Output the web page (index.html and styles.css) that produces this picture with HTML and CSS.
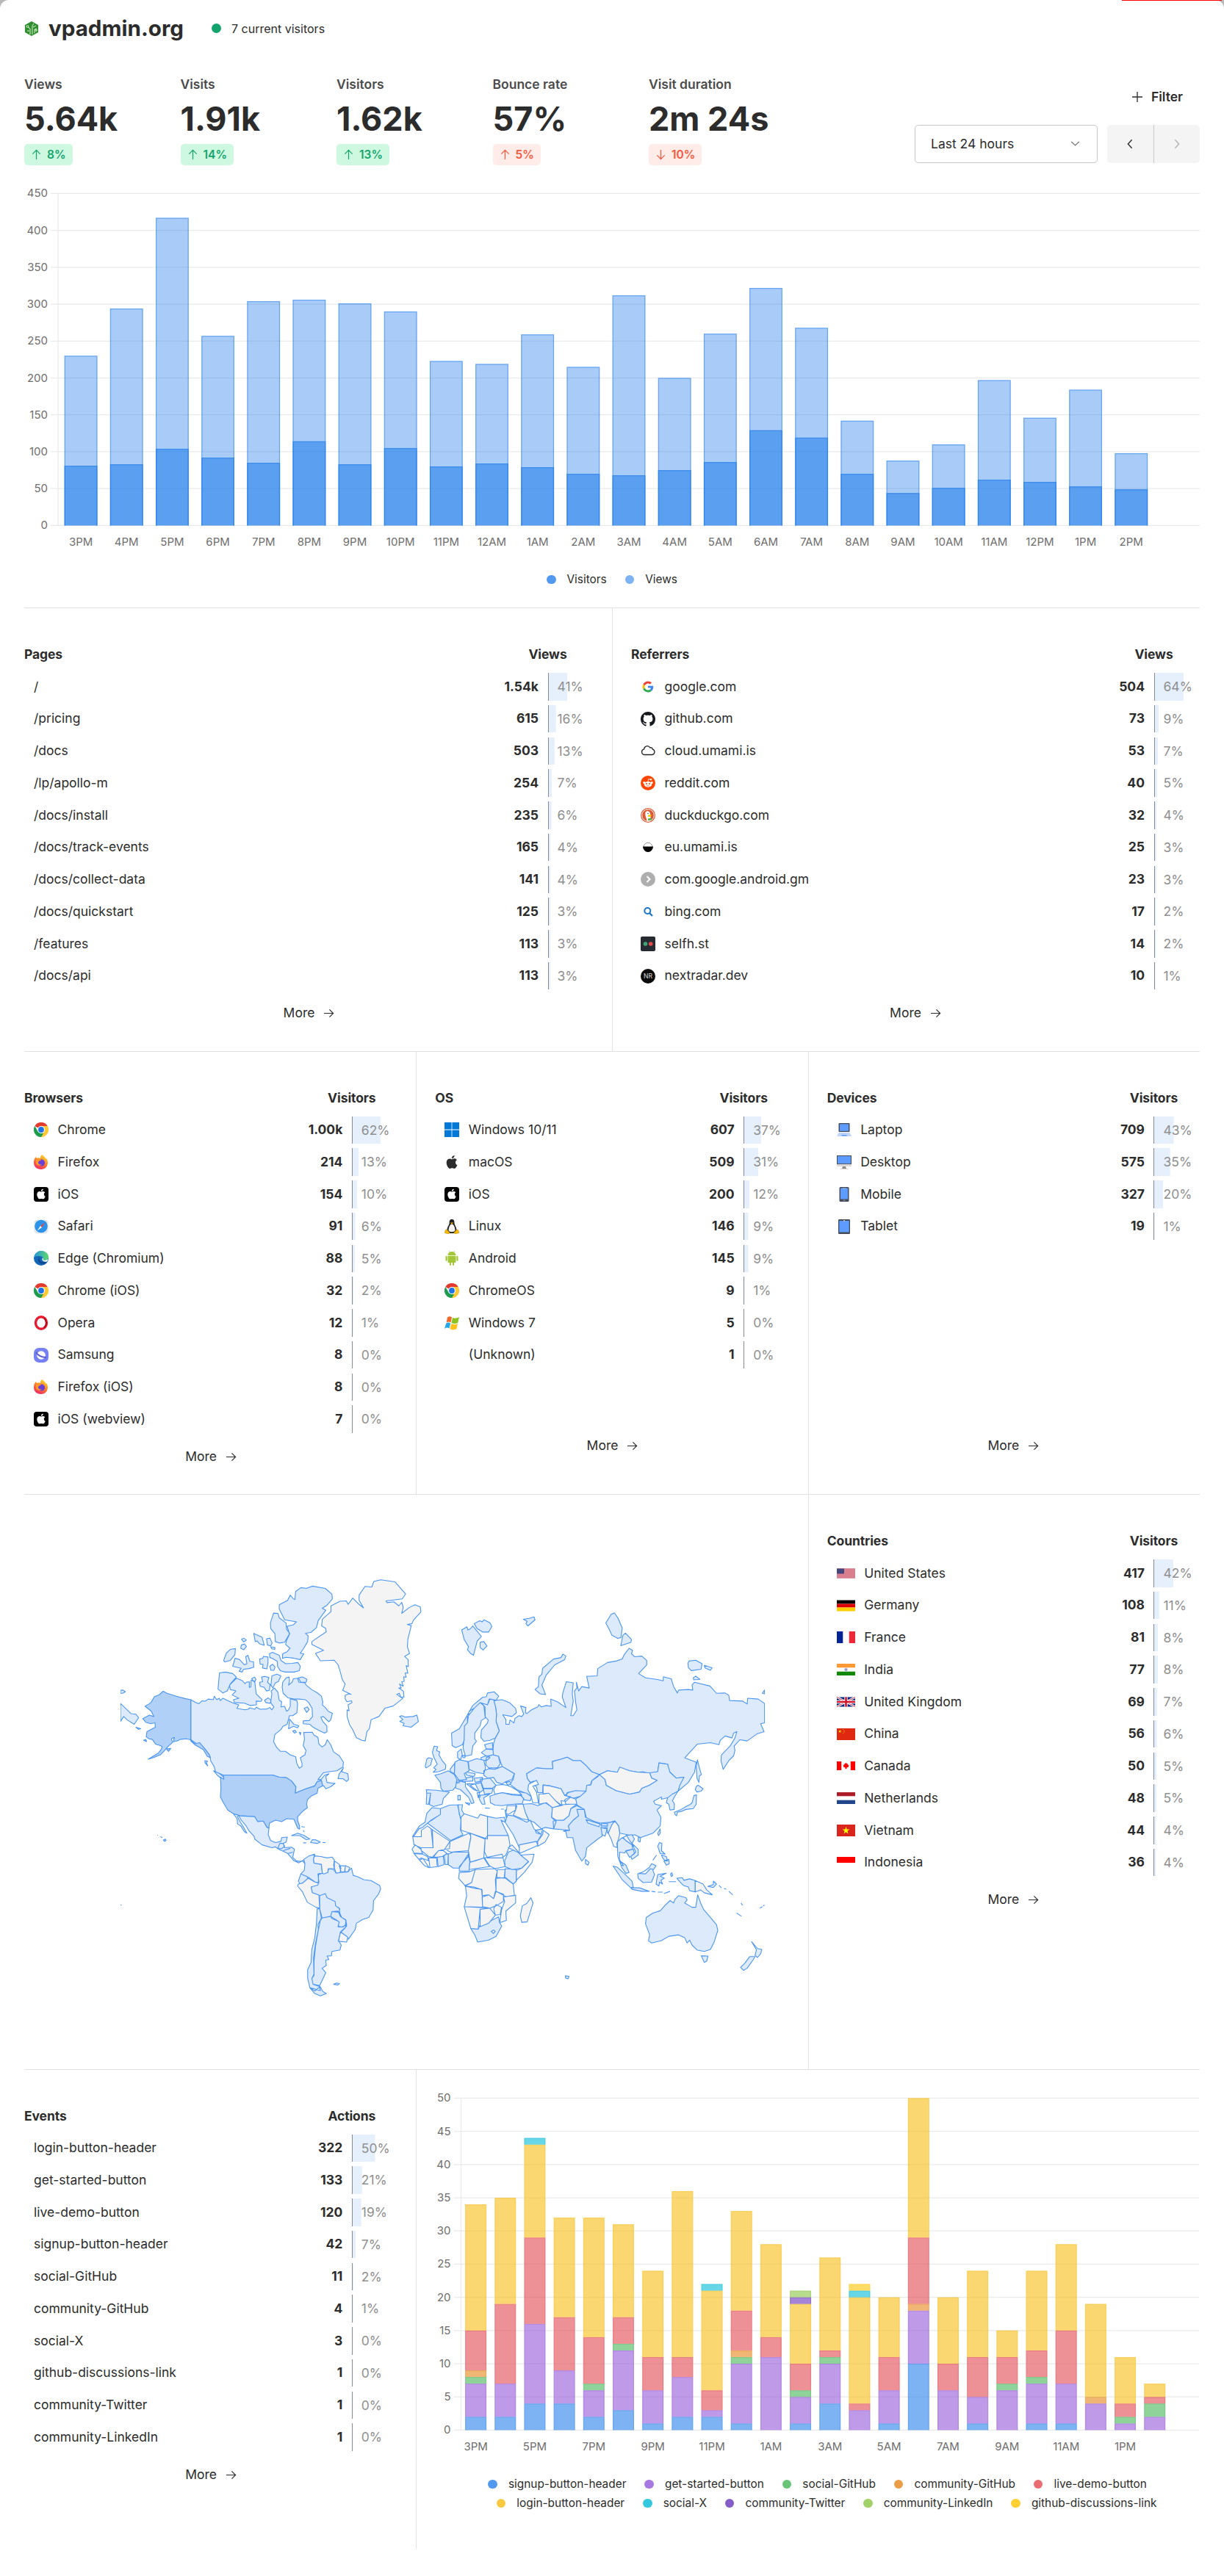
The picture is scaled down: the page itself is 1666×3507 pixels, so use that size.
FILE: index.html
```html
<!DOCTYPE html>
<html lang="en">
<head>
<meta charset="utf-8">
<title>vpadmin.org</title>
<link rel="stylesheet" href="styles.css">
</head>
<body>
<svg class="sprite" aria-hidden="true">
  <symbol id="arrow" viewBox="0 0 16 16"><path d="M1 8h13.500M9 2.500 14.500 8 9 13.500" fill="none" stroke="currentColor" stroke-width="1.300"/></symbol>
  <symbol id="chevron" viewBox="0 0 16 16"><path d="M5 1.500 11 8 5 14.500" fill="none" stroke="currentColor" stroke-width="1.600"/></symbol>
  <symbol id="site" viewBox="0 0 20 20"><path d="M10 0 19 5v10l-9 5-9-5V5z" fill="#2f8f2f"/><path d="M8 18v-8L5 8M11 18V6l2-3M14 16v-5l3-1M4 13h3M12 8l4-2" stroke="#d7efd0" fill="none"/><circle cx="4.500" cy="7" r="1.400" fill="none" stroke="#d7efd0"/><circle cx="16" cy="12" r="1.300" fill="none" stroke="#d7efd0"/></symbol>
  <symbol id="chrome" viewBox="0 0 20 20"><circle cx="10" cy="10" r="10" fill="#fff"/><path d="M10 10 1.300 5A10 10 0 0 1 18.700 5z" fill="#e23b2e"/><path d="M10 10V5h8.700A10 10 0 0 1 10 20z" fill="#fcc934"/><path d="M1.300 5 5.700 12.500 10 15l3-0-3 5A10 10 0 0 1 1.300 5z" fill="#1e9c4d"/><circle cx="10" cy="10" r="5" fill="#fff"/><circle cx="10" cy="10" r="3.900" fill="#1a73e8"/></symbol>
  <symbol id="firefox" viewBox="0 0 20 20"><linearGradient id="ff" x1=".8" y1="0" x2=".3" y2="1"><stop offset="0" stop-color="#ffe03a"/><stop offset=".45" stop-color="#ff8a1f"/><stop offset="1" stop-color="#f0246a"/></linearGradient><path d="M11 0c3 2 4 3 5 5l2 1c3 7-1 14-8 14C4 20 0 16 0 11c0-4 1-6 3-8l1 2c2-1 3-1 5 0 0-2 0-3 2-5z" fill="url(#ff)"/><circle cx="10.500" cy="11" r="4.600" fill="#6a3fd8"/><path d="M3 7c3-1 5-1 7 1-3 0-4 1-4 3s3 3 5 2c-2 3-7 2-8-1z" fill="#ff9a2a"/></symbol>
  <symbol id="apple" viewBox="0 0 24 24"><path d="M12.152 6.896c-.948 0-2.415-1.078-3.960-1.040-2.040.027-3.910 1.183-4.961 3.014-2.117 3.675-.546 9.103 1.519 12.090 1.013 1.454 2.208 3.090 3.792 3.039 1.520-.065 2.090-.987 3.935-.987 1.831 0 2.350.987 3.960.948 1.637-.026 2.676-1.480 3.676-2.948 1.156-1.688 1.636-3.325 1.662-3.415-.039-.013-3.182-1.221-3.220-4.857-.026-3.040 2.480-4.494 2.597-4.559-1.429-2.090-3.623-2.324-4.390-2.376-2-.156-3.675 1.090-4.610 1.090zM15.530 3.830c.843-1.012 1.400-2.427 1.245-3.830-1.207.052-2.662.805-3.532 1.818-.780.896-1.454 2.338-1.273 3.714 1.338.104 2.715-.688 3.559-1.701" fill="currentColor"/></symbol>
  <symbol id="macos" viewBox="0 0 20 20"><use href="#apple" x="1" y="1" width="18" height="18"/></symbol>
  <symbol id="ios" viewBox="0 0 20 20"><rect width="20" height="20" rx="4" fill="#000"/><use href="#apple" x="3" y="2.500" width="14" height="14" color="#fff"/></symbol>
  <symbol id="safari" viewBox="0 0 20 20"><rect x=".5" y=".5" width="19" height="19" rx="4.500" fill="#e2e6ea"/><circle cx="10" cy="9.500" r="8.800" fill="#2b93ea"/><path d="M15.500 4 11 11 9 9z" fill="#e8453c"/><path d="M4.500 15.500 9 9l2 2z" fill="#fff"/></symbol>
  <symbol id="edge" viewBox="0 0 20 20"><linearGradient id="eg" x1="0" y1=".2" x2="1" y2=".3"><stop offset="0" stop-color="#2196dc"/><stop offset="1" stop-color="#5fd66e"/></linearGradient><circle cx="10" cy="10" r="10" fill="#1267b8"/><path d="M.500 8.500C2 3 6 0 10 0c6 0 10 4 10 8 0 3-2 5-5 5-2 0-3-1-2-3-1-3-6-4-12.500-1.500z" fill="url(#eg)"/><path d="M8 8c-2 5 3 9 10 6l-1.500 2.500C13 19 5 18 6 11z" fill="#104a92"/><path d="M13 10c-1 2 0 3 2 3l4.500-1.500-1.500 3c-5 1-8-2-6-5z" fill="#fff"/></symbol>
  <symbol id="opera" viewBox="0 0 20 20"><ellipse cx="10" cy="10" rx="7.500" ry="8.200" fill="#fff" stroke="#e81c30" stroke-width="3.400"/><path d="M14 3.500c4 4 4 9 0 13" fill="none" stroke="#a70014" stroke-width="1.500"/></symbol>
  <symbol id="samsung" viewBox="0 0 20 20"><rect width="20" height="20" rx="7" fill="#7580f2"/><circle cx="10" cy="10" r="5.800" fill="#fff"/><path d="M3 6c3 5 8 7 14 7" fill="none" stroke="#5a5fd0" stroke-width="2"/></symbol>
  <symbol id="windows" viewBox="0 0 20 20"><path d="M0 0h9.600v9.600H0zM10.400 0H20v9.600h-9.600zM0 10.400h9.600V20H0zM10.400 10.400H20V20h-9.600z" fill="#0078d7"/></symbol>
  <symbol id="win7" viewBox="0 0 20 20"><path d="M4 2.500c2-1.500 4-1.500 6-.3L8.500 9.500c-2-1.200-4-1.200-6 .2z" fill="#f2672a"/><path d="M11 2.800c2 1.200 5 1.200 9-.5L18.200 9.800c-3 1.600-6 1.600-8.700.2z" fill="#8cc21f"/><path d="M2.200 10.700c2-1.400 4-1.400 6-.2l-1.700 7c-2-1.200-4-1.200-6.500.2z" fill="#27a8e8"/><path d="M9.200 11c2.500 1.500 5 1.500 8.700 0l-1.500 7.300c-4 1.700-6.500 1.400-9 0z" fill="#fdc31a"/></symbol>
  <symbol id="linux" viewBox="0 0 20 20"><path d="M10 0C7 0 6.500 2 6.700 5 6.500 8 3.500 10 3.500 15L6 19h8l2.500-4c0-5-3-7-3-10 0-3-.5-5-3.500-5z" fill="#222"/><path d="M10 6.500c-2.500 0-4.500 5-4.500 8.500 1 3 8 3 9 0C14.500 11.500 12.500 6.500 10 6.500z" fill="#f4f4f4"/><path d="M8 4.500h4l-2 2.500z" fill="#f5b800"/><path d="m3 13.500 4.500 5-2 1.500L0 18.500 1 15zM17 13.500l-4.500 5 2 1.500 5.500-1.500L19 15z" fill="#f5b800" stroke="#7a5c00" stroke-width=".3"/></symbol>
  <symbol id="android" viewBox="0 0 20 20"><g fill="#a4c639"><path d="M4.500 6A5.500 5 0 0 1 15.500 6zM4.500 6.800h11V15a1 1 0 0 1-1 1h-9a1 1 0 0 1-1-1zM7 15h2v4a1 1 0 0 1-2 0zM11 15h2v4a1 1 0 0 1-2 0z"/><rect x="1.500" y="6.800" width="2.200" height="7" rx="1.100"/><rect x="16.300" y="6.800" width="2.200" height="7" rx="1.100"/></g><path d="m6 0 1.500 2.500M14 0l-1.500 2.500" stroke="#a4c639" stroke-width=".7"/></symbol>
  <symbol id="laptop" viewBox="0 0 20 20"><rect x="2.500" y="1" width="15" height="12" rx="1" fill="#474d58"/><rect x="4" y="2.300" width="12" height="9.500" fill="#5d9bff"/><path d="m2.500 14h15l2.500 5H0z" fill="#bcd6ff"/><path d="M7 17h6l1 1.500H6z" fill="#5d9bff"/></symbol>
  <symbol id="desktop" viewBox="0 0 20 20"><rect y="1" width="20" height="15" rx="1" fill="#dcd8d6"/><rect y="1" width="20" height="12" fill="#474d58"/><rect x="1" y="2" width="18" height="10.200" fill="#5d9bff"/><path d="M8 16h4l1 3H7z" fill="#8d8a88"/><path d="M4 19h12v1H4z" fill="#d8d5d3"/></symbol>
  <symbol id="mobile" viewBox="0 0 20 20"><rect x="3.500" width="13" height="20" rx="1.500" fill="#474d58"/><rect x="5" y="1.500" width="10" height="15" fill="#5d9bff"/><path d="M8 1.500h4v1H8zM8.500 17.800h3v.8h-3z" fill="#b5bac4"/></symbol>
  <symbol id="tablet" viewBox="0 0 20 20"><rect x="2" width="16" height="20" rx="1.300" fill="#474d58"/><rect x="3.300" y="2" width="13.400" height="15.500" fill="#5d9bff"/><path d="M9 1h2v2H9z" fill="#b5bac4"/></symbol>
  <symbol id="google" viewBox="-8 -8 64 64"><path fill="#ea4335" d="M24 9.500c3.540 0 6.710 1.220 9.210 3.600l6.850-6.850C35.900 2.380 30.470 0 24 0 14.620 0 6.510 5.380 2.560 13.220l7.980 6.190C12.430 13.720 17.740 9.500 24 9.500z"/><path fill="#4285f4" d="M46.980 24.550c0-1.570-.150-3.090-.380-4.550H24v9.020h12.940c-.580 2.960-2.260 5.480-4.780 7.180l7.730 6c4.510-4.180 7.090-10.360 7.090-17.650z"/><path fill="#fbbc05" d="M10.530 28.590c-.480-1.450-.760-2.990-.760-4.590s.270-3.140.760-4.590l-7.980-6.190C.920 16.460 0 20.120 0 24c0 3.880.920 7.540 2.560 10.780l7.970-6.190z"/><path fill="#34a853" d="M24 48c6.480 0 11.930-2.130 15.890-5.810l-7.730-6c-2.150 1.450-4.920 2.300-8.160 2.300-6.260 0-11.570-4.220-13.470-9.910l-7.980 6.190C6.510 42.620 14.620 48 24 48z"/></symbol>
  <symbol id="github" viewBox="0 0 16 16"><path fill="#15181c" d="M8 0C3.580 0 0 3.580 0 8c0 3.540 2.290 6.530 5.470 7.590.4.070.55-.17.55-.38 0-.19-.01-.82-.01-1.490-2.010.37-2.530-.49-2.690-.94-.09-.23-.48-.94-.82-1.130-.28-.15-.68-.52-.01-.53.63-.01 1.080.58 1.230.82.72 1.210 1.870.87 2.330.66.070-.52.28-.87.51-1.070-1.780-.2-3.640-.89-3.640-3.950 0-.87.31-1.590.82-2.150-.08-.2-.36-1.020.08-2.120 0 0 .67-.21 2.200.82.64-.18 1.320-.27 2-.27.68 0 1.360.09 2 .27 1.530-1.040 2.200-.82 2.200-.82.44 1.100.16 1.920.08 2.120.51.56.82 1.270.82 2.150 0 3.070-1.870 3.750-3.650 3.950.29.25.54.73.54 1.480 0 1.070-.01 1.930-.01 2.200 0 .21.15.46.55.38A8.012 8.012 0 0 0 16 8c0-4.420-3.580-8-8-8z"/></symbol>
  <symbol id="cloud" viewBox="0 0 20 20"><path d="M5 15.500h10.500a3.800 3.800 0 0 0 .8-7.400A2.500 2.500 0 0 0 12.800 6 4.300 4.300 0 0 0 4.700 7.800 3.900 3.900 0 0 0 5 15.500z" fill="#fff" stroke="#222" stroke-width="1.300"/></symbol>
  <symbol id="reddit" viewBox="0 0 20 20"><circle cx="10" cy="10" r="10" fill="#ff4500"/><ellipse cx="10" cy="11.800" rx="5.300" ry="3.900" fill="#fff"/><circle cx="4.700" cy="9.500" r="1.400" fill="#fff"/><circle cx="15.300" cy="9.500" r="1.400" fill="#fff"/><path d="m10 8 .8-3.500 3 .6" stroke="#fff" fill="none" stroke-width=".8"/><circle cx="14" cy="5.200" r="1.200" fill="#fff"/><circle cx="8" cy="11" r="1.100" fill="#ff4500"/><circle cx="12" cy="11" r="1.100" fill="#ff4500"/><path d="M8 13.500q2 1.200 4 0" stroke="#ff4500" fill="none" stroke-width=".6"/></symbol>
  <symbol id="duck" viewBox="0 0 20 20"><circle cx="10" cy="10" r="10" fill="#de5833"/><circle cx="10" cy="10" r="8.300" fill="#de5833" stroke="#fff" stroke-width="1"/><path d="M6.500 6C8 3 13 4 13 8l1 9-5 1.500C8 14 5.500 10 6.500 6z" fill="#fff"/><path d="M10 9.500 15 9l-1.500 2.500-3.500.5z" fill="#fc0"/><path d="m10 14.500 5-1v3l-5 .5z" fill="#4fae47"/><circle cx="10" cy="7.500" r=".8" fill="#2d4f8e"/></symbol>
  <symbol id="bowl" viewBox="0 0 20 20"><path d="M4 9a6 5.700 0 0 1 12 0" fill="#fff" stroke="#777" stroke-width=".8"/><path d="M3 8.500h14a7 7.500 0 0 1-14 0z" fill="#000"/></symbol>
  <symbol id="next" viewBox="0 0 20 20"><circle cx="10" cy="10" r="10" fill="#aeaeae"/><path d="m8.500 6 4 4-4 4" fill="none" stroke="#fff" stroke-width="2"/></symbol>
  <symbol id="bing" viewBox="0 0 20 20"><circle cx="9.300" cy="9" r="4" fill="none" stroke="#1b74c5" stroke-width="2"/><path d="m12 12 4 4" stroke="#1b74c5" stroke-width="2.300"/></symbol>
  <symbol id="selfh" viewBox="0 0 20 20"><rect width="20" height="20" rx="2" fill="#252a33"/><circle cx="6.500" cy="10" r="2.800" fill="#43a577"/><circle cx="13.700" cy="10" r="2.800" fill="#e5484d"/></symbol>
  <symbol id="us" viewBox="0 0 25 13"><path fill="#e9a9b4" d="M0 0h25v13H0z"/><path d="M0 .5h25M0 2.500h25M0 4.500h25M0 6.500h25M0 8.500h25M0 10.500h25M0 12.500h25" stroke="#c6566b"/><path fill="#46467f" d="M0 0h10v7H0z"/></symbol>
  <symbol id="de" viewBox="0 0 25 15"><path d="M0 0h25v5H0z"/><path fill="#d00" d="M0 5h25v5H0z"/><path fill="#ffce00" d="M0 10h25v5H0z"/></symbol>
  <symbol id="fr" viewBox="0 0 25 16"><path fill="#fff" d="M0 0h25v16H0z"/><path fill="#002395" d="M0 0h8.300v16H0z"/><path fill="#ed2939" d="M16.700 0H25v16h-8.300z"/></symbol>
  <symbol id="in" viewBox="0 0 25 16"><path fill="#fff" d="M0 0h25v16H0z"/><path fill="#f93" d="M0 0h25v5.300H0z"/><path fill="#128807" d="M0 10.700h25V16H0z"/><circle cx="12.500" cy="8" r="2.100" fill="#9a9ad2"/></symbol>
  <symbol id="gb" viewBox="0 0 25 13"><path fill="#00247d" d="M0 0h25v13H0z"/><path d="m0 0 25 13M25 0 0 13" stroke="#fff" stroke-width="2.600"/><path d="m0 0 25 13M25 0 0 13" stroke="#cf142b" stroke-width=".9"/><path d="M12.500 0v13M0 6.500h25" stroke="#fff" stroke-width="4.400"/><path d="M12.500 0v13M0 6.500h25" stroke="#cf142b" stroke-width="2.600"/></symbol>
  <symbol id="cn" viewBox="0 0 25 16"><path fill="#de2910" d="M0 0h25v16H0z"/><path fill="#ffde00" d="m4.200 1.800.6 1.600h1.600l-1.300 1 .5 1.600-1.400-1-1.400 1 .5-1.600-1.300-1h1.600z"/><path d="M8 1.500h1M9.500 3h1M9.500 5h1M8 6.500h1" stroke="#ffb000"/></symbol>
  <symbol id="ca" viewBox="0 0 25 12"><path fill="#fff" d="M0 0h25v12H0z"/><path fill="red" d="M0 0h6.200v12H0zM18.800 0H25v12h-6.200zM12.500 1.500l1.300 2 1.200-.5-.2 2 1.900-.4-1 2 .7 1-2.800.7-.2 2h-1.800l-.2-2-2.800-.7.700-1-1-2 1.900.4-.2-2 1.200.5z"/></symbol>
  <symbol id="nl" viewBox="0 0 25 16"><path fill="#fff" d="M0 0h25v16H0z"/><path fill="#ae1c28" d="M0 0h25v5.300H0z"/><path fill="#21468b" d="M0 10.700h25V16H0z"/></symbol>
  <symbol id="vn" viewBox="0 0 25 16"><path fill="#da251d" d="M0 0h25v16H0z"/><path fill="#ff0" d="m12.500 3 1.200 3.600h3.700l-3 2.200 1.100 3.600-3-2.200-3 2.200 1.100-3.600-3-2.200h3.700z"/></symbol>
  <symbol id="id" viewBox="0 0 25 16"><path fill="#fff" d="M0 0h25v16H0z"/><path fill="red" d="M0 0h25v8H0z"/></symbol>
</svg>
<div class="page">
<div class="progress"></div>
<div class="container">
  <header class="site-header"><svg class="icon"><use href="#site"/></svg><h1>vpadmin.org</h1><span class="live-dot"></span><span>7 current visitors</span></header>
  <section class="overview">
    <div class="summary">
      <div class="metrics">
        <div class="metric"><div class="metric-label">Views</div><div class="metric-value">5.64k</div><span class="badge"><svg class="up"><use href="#arrow"/></svg>8%</span></div>
        <div class="metric"><div class="metric-label">Visits</div><div class="metric-value">1.91k</div><span class="badge"><svg class="up"><use href="#arrow"/></svg>14%</span></div>
        <div class="metric"><div class="metric-label">Visitors</div><div class="metric-value">1.62k</div><span class="badge"><svg class="up"><use href="#arrow"/></svg>13%</span></div>
        <div class="metric"><div class="metric-label">Bounce rate</div><div class="metric-value">57%</div><span class="badge bad"><svg class="up"><use href="#arrow"/></svg>5%</span></div>
        <div class="metric"><div class="metric-label">Visit duration</div><div class="metric-value">2m 24s</div><span class="badge bad"><svg class="down"><use href="#arrow"/></svg>10%</span></div>
      </div>
      <div class="controls">
        <button class="filter"><svg viewBox="0 0 14 14"><path d="M7 0v14M0 7h14" stroke="currentColor" stroke-width="1.300"/></svg>Filter</button>
        <div class="range">
          <div class="select">Last 24 hours<svg class="caret"><use href="#chevron"/></svg></div>
          <div class="pager"><span><svg class="prev"><use href="#chevron"/></svg></span><span class="off"><svg><use href="#chevron"/></svg></span></div>
        </div>
      </div>
    </div>
    <svg class="chart" id="traffic"></svg>
    <div class="legend"><span><i style="background:#5199ef"></i>Visitors</span><span><i style="background:#7db3f3"></i>Views</span></div>
  </section>

  <section class="grid two">
    <div class="panel">
      <div class="head"><span>Pages</span><span>Views</span></div>
      <ul>
        <li><span>/</span><b>1.54k</b><em style="--p:41%">41%</em></li>
        <li><span>/pricing</span><b>615</b><em style="--p:16%">16%</em></li>
        <li><span>/docs</span><b>503</b><em style="--p:13%">13%</em></li>
        <li><span>/lp/apollo-m</span><b>254</b><em style="--p:7%">7%</em></li>
        <li><span>/docs/install</span><b>235</b><em style="--p:6%">6%</em></li>
        <li><span>/docs/track-events</span><b>165</b><em style="--p:4%">4%</em></li>
        <li><span>/docs/collect-data</span><b>141</b><em style="--p:4%">4%</em></li>
        <li><span>/docs/quickstart</span><b>125</b><em style="--p:3%">3%</em></li>
        <li><span>/features</span><b>113</b><em style="--p:3%">3%</em></li>
        <li><span>/docs/api</span><b>113</b><em style="--p:3%">3%</em></li>
      </ul>
      <div class="more">More<svg><use href="#arrow"/></svg></div>
    </div>
    <div class="panel">
      <div class="head"><span>Referrers</span><span>Views</span></div>
      <ul>
        <li><svg class="icon"><use href="#google"/></svg><span>google.com</span><b>504</b><em style="--p:64%">64%</em></li>
        <li><svg class="icon"><use href="#github"/></svg><span>github.com</span><b>73</b><em style="--p:9%">9%</em></li>
        <li><svg class="icon"><use href="#cloud"/></svg><span>cloud.umami.is</span><b>53</b><em style="--p:7%">7%</em></li>
        <li><svg class="icon"><use href="#reddit"/></svg><span>reddit.com</span><b>40</b><em style="--p:5%">5%</em></li>
        <li><svg class="icon"><use href="#duck"/></svg><span>duckduckgo.com</span><b>32</b><em style="--p:4%">4%</em></li>
        <li><svg class="icon"><use href="#bowl"/></svg><span>eu.umami.is</span><b>25</b><em style="--p:3%">3%</em></li>
        <li><svg class="icon"><use href="#next"/></svg><span>com.google.android.gm</span><b>23</b><em style="--p:3%">3%</em></li>
        <li><svg class="icon"><use href="#bing"/></svg><span>bing.com</span><b>17</b><em style="--p:2%">2%</em></li>
        <li><svg class="icon"><use href="#selfh"/></svg><span>selfh.st</span><b>14</b><em style="--p:2%">2%</em></li>
        <li><svg class="icon" viewBox="0 0 20 20"><circle cx="10" cy="10" r="10" fill="#0b0b0b"/><text class="monogram" x="10" y="13" text-anchor="middle">NR</text></svg><span>nextradar.dev</span><b>10</b><em style="--p:1%">1%</em></li>
      </ul>
      <div class="more">More<svg><use href="#arrow"/></svg></div>
    </div>
  </section>

  <section class="grid three">
    <div class="panel">
      <div class="head"><span>Browsers</span><span>Visitors</span></div>
      <ul>
        <li><svg class="icon"><use href="#chrome"/></svg><span>Chrome</span><b>1.00k</b><em style="--p:62%">62%</em></li>
        <li><svg class="icon"><use href="#firefox"/></svg><span>Firefox</span><b>214</b><em style="--p:13%">13%</em></li>
        <li><svg class="icon"><use href="#ios"/></svg><span>iOS</span><b>154</b><em style="--p:10%">10%</em></li>
        <li><svg class="icon"><use href="#safari"/></svg><span>Safari</span><b>91</b><em style="--p:6%">6%</em></li>
        <li><svg class="icon"><use href="#edge"/></svg><span>Edge (Chromium)</span><b>88</b><em style="--p:5%">5%</em></li>
        <li><svg class="icon"><use href="#chrome"/></svg><span>Chrome (iOS)</span><b>32</b><em style="--p:2%">2%</em></li>
        <li><svg class="icon"><use href="#opera"/></svg><span>Opera</span><b>12</b><em style="--p:1%">1%</em></li>
        <li><svg class="icon"><use href="#samsung"/></svg><span>Samsung</span><b>8</b><em style="--p:0%">0%</em></li>
        <li><svg class="icon"><use href="#firefox"/></svg><span>Firefox (iOS)</span><b>8</b><em style="--p:0%">0%</em></li>
        <li><svg class="icon"><use href="#ios"/></svg><span>iOS (webview)</span><b>7</b><em style="--p:0%">0%</em></li>
      </ul>
      <div class="more">More<svg><use href="#arrow"/></svg></div>
    </div>
    <div class="panel">
      <div class="head"><span>OS</span><span>Visitors</span></div>
      <ul>
        <li><svg class="icon"><use href="#windows"/></svg><span>Windows 10/11</span><b>607</b><em style="--p:37%">37%</em></li>
        <li><svg class="icon"><use href="#macos"/></svg><span>macOS</span><b>509</b><em style="--p:31%">31%</em></li>
        <li><svg class="icon"><use href="#ios"/></svg><span>iOS</span><b>200</b><em style="--p:12%">12%</em></li>
        <li><svg class="icon"><use href="#linux"/></svg><span>Linux</span><b>146</b><em style="--p:9%">9%</em></li>
        <li><svg class="icon"><use href="#android"/></svg><span>Android</span><b>145</b><em style="--p:9%">9%</em></li>
        <li><svg class="icon"><use href="#chrome"/></svg><span>ChromeOS</span><b>9</b><em style="--p:1%">1%</em></li>
        <li><svg class="icon"><use href="#win7"/></svg><span>Windows 7</span><b>5</b><em style="--p:0%">0%</em></li>
        <li><svg class="icon"></svg><span>(Unknown)</span><b>1</b><em style="--p:0%">0%</em></li>
      </ul>
      <div class="more">More<svg><use href="#arrow"/></svg></div>
    </div>
    <div class="panel">
      <div class="head"><span>Devices</span><span>Visitors</span></div>
      <ul>
        <li><svg class="icon"><use href="#laptop"/></svg><span>Laptop</span><b>709</b><em style="--p:43%">43%</em></li>
        <li><svg class="icon"><use href="#desktop"/></svg><span>Desktop</span><b>575</b><em style="--p:35%">35%</em></li>
        <li><svg class="icon"><use href="#mobile"/></svg><span>Mobile</span><b>327</b><em style="--p:20%">20%</em></li>
        <li><svg class="icon"><use href="#tablet"/></svg><span>Tablet</span><b>19</b><em style="--p:1%">1%</em></li>
      </ul>
      <div class="more">More<svg><use href="#arrow"/></svg></div>
    </div>
  </section>

  <section class="grid geo">
    <div class="map">
      <svg viewBox="42 50 2630 1500" preserveAspectRatio="none">
        <g>
          <path class="none" d="M1016 130 1040 100 1068 102 1076 83 1104 77 1162 84 1206 126 1192 143 1126 150 1130 156 1158 153 1178 167 1190 155 1196 172 1190 193 1220 173 1244 163 1266 171 1268 188 1238 216 1232 228 1213 231 1229 235 1215 282 1213 308 1222 331 1202 341 1216 352 1217 376 1208 373 1215 399 1204 398 1208 413 1198 411 1200 427 1190 428 1196 444 1181 436 1188 450 1178 450 1197 461 1199 481 1186 482 1180 468 1170 472 1194 486 1155 512 1122 519 1097 548 1065 559 1058 590 1048 600 1041 632 1027 630 1005 621 989 592 977 576 967 548 967 525 975 528 971 508 987 500 985 494 966 497 959 487 959 475 975 470 983 472 949 458 959 436 948 422 938 391 930 370 914 354 858 356 838 331 871 320 823 300 823 290 882 256 879 244 863 236 866 213 901 187 901 167 938 151 964 150 971 162 990 140 1013 160 1034 174 1016 148Z"/>
          <path d="M754 145 757 117 779 104 800 107 826 99 878 107 905 127 907 143 885 165 866 175 880 182 849 218 842 242 820 258 797 262 808 270 806 290 790 313 776 330 790 332 776 352 748 347 716 344 703 348 704 332 722 325 734 313 716 300 720 285 732 265 722 237 748 232 760 222 712 215 690 178 690 163 724 148 735 130 748 143ZM667 192 685 193 690 208 718 226 720 248 733 262 712 292 690 295 674 290 672 262 655 245 654 225ZM586 262 620 275 629 303 610 298 600 288 592 290ZM638 280 652 278 661 295 655 305 642 302ZM655 308 672 310 672 317 660 315ZM536 282 545 278 556 285 545 291ZM535 302 548 298 556 307 545 318 533 313ZM463 355 474 330 490 317 511 314 509 335 490 355 468 360ZM500 375 510 347 528 352 548 370 558 366 553 342 562 337 570 358 585 360 586 378 567 383 545 385 538 395 526 392 535 382ZM610 350 622 348 626 341 644 343 644 362 640 384 622 381 624 368 612 368ZM652 375 662 368 673 378 668 389 656 389ZM650 332 662 327 690 337 697 355 716 366 742 365 766 362 776 375 772 390 750 395 715 395 694 390 683 375 682 358 662 348 652 345ZM446 398 470 395 500 400 515 412 490 436 478 460 460 467 440 453ZM487 440 516 416 540 425 550 435 556 430 568 428 568 448 574 446 575 423 590 427 596 470 620 490 615 496 596 495 597 508 570 510 548 502 507 500 503 490 525 485 498 474 513 460 490 455ZM577 418 589 412 595 420 589 430ZM610 430 622 428 618 412 632 410 648 414 642 430 653 438 650 458 638 460 628 447 612 444ZM660 408 680 402 697 408 686 428 674 432 664 450 656 440Z"/>
          <path d="M704 430 718 415 730 412 732 425 728 440 742 430 748 418 765 416 770 430 795 432 800 440 822 455 845 466 862 478 868 498 866 508 878 517 890 530 907 537 900 560 892 566 870 548 860 550 868 565 884 580 885 600 875 605 850 595 825 583 815 575 788 573 788 563 812 562 826 548 824 520 810 500 796 490 770 488 750 488 726 484 706 468 702 448ZM768 415 785 412 803 420 800 430 778 430ZM792 520 805 515 812 524 802 534ZM732 557 750 575 770 580 765 587 748 582 728 590ZM745 598 755 596 760 602 752 605ZM772 602 778 604 776 611ZM630 492 645 484 658 493 652 503 635 500ZM952 725 945 738 970 745 973 765 965 772 950 762 930 762 935 745ZM422 735 440 740 464 757 462 767 440 752ZM386 700 398 702 392 706 398 718 388 708Z"/>
          <path d="M329 490 350 500 362 504 374 494 388 495 400 488 421 490 425 478 435 490 445 485 450 493 460 485 480 493 505 503 525 508 517 520 550 525 563 523 570 518 590 523 597 516 612 523 640 522 652 517 660 525 668 515 655 500 660 470 657 460 670 450 684 463 690 492 700 497 697 515 712 513 720 530 728 525 735 512 735 487 762 493 765 505 762 535 745 545 732 545 722 575 705 582 697 593 672 610 667 635 680 655 695 668 715 668 735 680 757 687 762 710 772 726 783 720 783 710 776 690 795 680 799 665 788 648 793 625 790 603 825 602 832 612 848 620 852 643 865 653 878 645 886 628 900 645 912 670 935 683 952 705 950 722 925 735 895 738 870 742 848 765 860 765 875 750 893 745 880 755 885 775 908 778 918 778 900 790 880 797 872 787 866 787 862 768 845 772 835 787 800 797 790 800 755 812 758 790 740 770 718 758 690 757 665 750 462 750 430 738 424 720 410 700 408 690 405 680 385 658 350 640 329 628Z"/>
          <path class="top" d="M329 490 305 486 270 478 232 468 216 461 200 473 180 480 168 498 158 505 142 513 150 518 168 530 178 548 160 543 133 555 145 568 165 573 183 570 184 585 168 592 150 600 147 618 158 625 172 627 185 643 205 648 212 652 208 662 195 675 155 695 175 690 205 680 222 665 240 648 255 637 250 625 262 620 258 635 275 632 285 627 310 625 329 628 345 642 365 638 385 658 405 680 409 690 396 685 380 662 345 645 329 632ZM230 660 247 658 238 668ZM136 630 145 627 149 634ZM462 750 665 750 690 757 718 758 740 770 758 790 755 812 790 800 800 797 835 787 845 772 862 768 868 787 848 795 845 812 820 822 805 835 802 850 805 862 785 875 765 893 765 905 773 925 773 936 765 932 755 912 750 902 720 900 700 910 675 905 650 915 648 932 640 930 625 910 610 908 602 910 590 893 575 892 530 890 503 883 480 870 462 845 450 825 452 790 450 757 464 764ZM217 973 225 970 228 975 222 978ZM205 962 213 965M192 957h2M42 1197h4"/>
          <path d="M503 883 530 890 575 892 590 893 602 910 625 908 640 930 648 932 645 955 655 975 675 982 697 978 700 965 723 963 718 980 706 985 712 995 700 1003 684 1003 675 997 660 1000 620 990 590 970 587 960 565 940 555 925 535 905 524 888 520 893 530 910 545 930 558 950 548 945 533 925 520 918 518 900ZM684 1003 692 985 706 985 712 1000 740 998 752 1005 745 1033 760 1045 775 1047 792 1042 795 1055 785 1045 770 1052 750 1045 735 1030 722 1018 700 1010ZM706 1010 735 1002M725 1020 745 1015M740 958 765 950 790 957 815 970 800 972 775 958ZM818 982 825 972 840 973 858 980 845 985ZM867 982h12M788 983h12M780 927 794 929M788 940 792 945"/>
          <path d="M795 1055 790 1040 812 1028 835 1022 830 1038 832 1053 862 1057 866 1088 848 1090 852 1120 836 1118 815 1105 800 1098 778 1090 792 1078ZM778 1090 805 1100 805 1107 785 1122 775 1125 768 1115ZM866 1088 888 1085 892 1072 912 1075 922 1087 942 1085 970 1083 985 1070 992 1095 1010 1100 1035 1110 1065 1113 1100 1130 1104 1142 1095 1160 1075 1182 1073 1215 1055 1240 1030 1247 1005 1260 1000 1282 972 1315 965 1305 940 1290 965 1270 962 1248 945 1240 937 1225 935 1208 920 1200 918 1185 885 1172 878 1158 855 1165 825 1155 820 1138 830 1125 850 1122 850 1093ZM855 1165 878 1158 885 1172 918 1185 920 1200 937 1210 935 1222 905 1220 900 1236 865 1242 855 1210ZM900 1236 905 1220 930 1218 940 1237 962 1250 960 1268 945 1273 930 1270 935 1255 905 1243ZM865 1242 900 1236 935 1255 930 1272 950 1273 965 1262 960 1275 940 1292 932 1320 943 1335 938 1352 905 1357 903 1372 885 1373 893 1385 880 1387 882 1405 865 1415 880 1430 868 1452 855 1475 828 1470 823 1450 832 1435 832 1390 838 1340 848 1290 858 1250ZM845 1210 855 1210 862 1242 848 1265 850 1280 838 1330 830 1380 832 1440 823 1450 828 1470 855 1478 858 1492 815 1482 806 1450 806 1420 820 1395 823 1350 835 1310 842 1260ZM815 1482 835 1493 857 1478 868 1495 882 1502 858 1510 835 1502ZM912 1470 924 1466 936 1468 928 1473Z"/>
          <path class="none" d="M835 1028 860 1030 885 1035 905 1032 915 1042 912 1060 915 1072 890 1072 888 1085 872 1090 866 1088 862 1057 832 1053 830 1038ZM915 1045 935 1057 942 1070 938 1085 922 1087 915 1070ZM935 1062 960 1062 958 1083 942 1082ZM960 1062 978 1068 970 1083 957 1083ZM768 1125 785 1122 808 1105 836 1118 850 1122 848 1128 820 1135 825 1155 852 1163 855 1208 840 1205 805 1188 785 1152 765 1132ZM940 1290 970 1308 965 1325 932 1322Z"/>
          <path d="M42 503 85 538 105 540 116 552 98 575 70 560 55 548 42 565ZM42 458 52 457 62 463 50 468 42 468ZM105 585 125 590 115 592ZM1181 548 1190 545 1205 550 1235 548 1252 543 1258 565 1228 585 1195 580 1200 572 1182 565 1195 558Z"/>
        </g>
        <g transform="translate(1200)">
          <path d="M235 250 256 239 260 250 270 246 280 236 315 272 298 288 283 337 270 330 258 318 263 308 245 283ZM286 228 308 218 318 222 326 215 350 225 358 238 345 257 320 257 297 245ZM310 292 325 290 338 305 322 319 310 310ZM486 213 510 210 530 205 534 215 505 236 497 228 502 220ZM823 226 845 196 858 191 872 208 890 243 885 276 872 279 848 268 838 250ZM884 304 893 268 903 261 928 283 925 293ZM1158 365 1162 357 1190 354 1216 366 1212 385 1172 390 1160 380ZM1225 372 1257 380 1250 389 1228 381ZM1180 415 1190 409 1207 420 1182 422ZM1462 468 1471 457 1471 470ZM534 455 548 445 550 412 562 402 565 382 610 350 640 345 648 333 660 340 655 352 615 370 580 405 562 440 577 472 555 470Z"/>
          <path d="M375 492 400 490 430 500 455 520 458 535 440 548 402 542 415 558 415 575 428 575 432 560 448 570 452 555 468 545 480 548 488 540 475 512 497 517 495 535 500 538 520 525 545 515 550 507 560 515 580 510 600 513 598 488 625 497 660 517 645 480 648 465 662 428 690 432 686 470 690 495 680 545 690 545 705 525 700 500 695 460 705 450 703 430 712 460 725 445 755 450 745 410 788 408 790 383 830 362 865 357 890 350 898 335 918 313 932 320 928 332 940 342 970 340 990 355 990 370 957 400 985 415 1030 420 1057 425 1058 411 1090 418 1100 445 1115 467 1120 457 1160 455 1178 457 1175 440 1185 430 1248 443 1275 468 1310 467 1325 475 1328 493 1382 495 1400 505 1402 485 1445 488 1471 503 1471 570 1455 573 1469 600 1440 608 1400 632 1370 628 1347 650 1350 665 1345 683 1325 700 1302 730 1293 700 1295 680 1330 650 1350 622 1358 600 1345 605 1338 622 1310 615 1290 630 1285 645 1250 638 1197 643 1145 690 1165 697 1192 705 1185 740 1160 775 1118 805 1125 780 1130 765 1142 757 1110 760 1080 735 1075 712 1040 708 1035 738 1000 745 975 738 955 740 920 735 880 725 870 740 830 735 797 748 765 738 740 715 720 700 690 700 665 688 640 695 605 703 607 728 580 728 540 725 500 745 503 762 515 775 508 790 510 805 520 825 490 810 460 800 430 780 445 765 450 745 400 720 385 685 360 680 365 640 372 622 388 597 375 565 377 540 373 515 365 495Z"/>
          <path d="M193 605 225 590 250 555 280 510 320 482 335 480 340 467 367 463 386 478 375 492 350 488 340 508 310 500 285 520 265 530 258 570 246 580 245 630 238 645 210 655 196 648ZM245 625 246 580 258 570 258 550 285 520 310 500 325 510 331 553 315 562 310 580 288 605 288 625 295 633 280 650 275 680 250 685 240 655ZM310 500 340 508 347 488 365 490 373 515 377 540 375 565 388 597 372 622 350 630 325 633 313 620 315 595 340 570 343 560 331 550 330 515ZM218 670 233 660 237 680 230 697 218 690ZM238 682h10v8h-8ZM115 672 122 650 137 652 132 665 145 670 142 680 155 700 170 715 168 730 140 738 118 740 130 730 120 725 135 712 122 690ZM86 720 92 695 100 690 115 693 108 715 90 725Z"/>
          <path d="M1197 697 1205 725 1213 748 1205 752 1203 775 1195 760 1192 720ZM500 745 540 725 580 728 607 728 605 703 640 695 665 688 690 700 720 700 740 715 765 738 797 748 790 755 765 770 760 785 745 785 742 805 700 803 670 810 655 820 640 797 595 787 567 783 565 810 545 810 540 790 525 785 530 770 515 775 503 762ZM665 810 700 803 742 805 720 822 690 830 662 825ZM620 905 650 905 672 890 680 865 705 855 735 868 715 870 712 890 690 905 670 925 675 940 650 938 610 935 608 908ZM485 850 520 848 545 855 575 845 605 860 602 895 620 910 610 935 575 930 560 935 530 912 508 905 495 880 485 868ZM797 748 820 765 825 785 865 803 920 815 960 808 970 795 1000 785 1032 768 1010 760 1002 742 1035 738 1040 708 1075 712 1085 740 1110 760 1142 757 1125 785 1118 805 1095 815 1075 828 1050 833 1050 825 1018 840 1025 850 1050 855 1032 870 1048 895 1045 925 1015 950 975 962 965 965 940 955 930 958 910 955 880 950 875 925 860 908 840 912 800 915 745 902 735 868 700 850 700 832 720 822 742 805 745 785 762 783 767 768ZM955 965 965 965 963 980 955 977ZM1035 950 1045 935 1045 950 1038 958ZM1075 828 1095 815 1118 805 1105 822 1095 838 1103 848 1102 868 1085 870 1080 850 1070 845ZM1193 788 1200 785 1220 797 1212 805 1195 808 1188 800ZM1183 820 1193 818 1192 850 1180 865 1150 868 1130 875 1115 878 1112 890 1105 885 1103 878 1130 868 1150 858 1165 852 1175 845Z"/>
          <path class="mid" d="M705 868 735 868 740 895 800 920 830 915 860 908 850 930 830 950 828 930 808 932 808 960 790 970 745 1000 740 1030 725 1046 700 1010 688 965 665 965 660 945 650 942 675 940 670 925 690 905 712 890Z"/>
          <path d="M742 903 800 918 795 928 750 915ZM805 917h25v8h-25ZM803 930 828 935 820 960 808 955ZM870 980 890 965 905 975 930 990 932 1005 905 1010 900 1018 880 1015 878 1040 895 1062 885 1060 872 1030ZM905 958 930 955 940 970 930 985 955 1005 955 1025 930 1040 925 1030 945 1015 935 995 915 975ZM905 1012 935 1005 940 1020 920 1033ZM880 1045 905 1060 918 1085 905 1088 888 1068ZM853 1063 870 1067 900 1090 930 1115 935 1135 925 1138 890 1110ZM925 1138 960 1138 1000 1150 970 1150 930 1143ZM1010 1150 1025 1152M1035 1153h20M1060 1158 1085 1150M953 1090 975 1083 1000 1068 1010 1055 1028 1062 1015 1078 1022 1092 1010 1118 975 1120 955 1105ZM955 1088 985 1090 1005 1072 1018 1075M1032 1105 1035 1092 1070 1088 1045 1098 1062 1105 1048 1112 1055 1125 1042 1118 1040 1132 1028 1125ZM1087 1090 1093 1086 1096 1096 1090 1099ZM1080 1117h30M1113 1105 1135 1103 1142 1112 1165 1107 1188 1113 1188 1152 1165 1148 1160 1135 1140 1130 1125 1117ZM1035 995 1042 982 1052 985 1050 1010 1065 1022 1045 1020ZM1050 1025 1070 1030 1075 1045 1065 1045 1055 1035ZM1060 1045 1080 1040 1082 1055 1070 1060ZM1015 1043 1030 1025M1240 1133 1262 1127 1262 1115 1275 1125 1262 1137ZM1285 1130 1295 1138M1305 1140 1315 1143M1325 1150 1341 1162"/>
          <path d="M988 1240 1015 1225 1045 1217 1065 1198 1085 1182 1100 1190 1105 1178 1120 1165 1150 1172 1155 1180 1145 1190 1175 1205 1190 1205 1198 1162 1210 1190 1222 1212 1250 1240 1275 1265 1280 1285 1265 1325 1250 1350 1225 1357 1195 1352 1175 1335 1165 1318 1155 1328 1145 1310 1120 1300 1080 1305 1050 1320 1010 1328 997 1320 1002 1300 985 1262ZM1213 1372 1240 1373 1235 1390 1225 1395ZM1418 1323 1435 1340 1442 1347 1460 1350 1455 1365 1442 1378 1432 1370 1438 1352ZM1410 1375 1432 1375 1425 1385 1400 1415 1385 1422 1373 1412 1390 1398ZM1357 1225 1377 1236M1452 1208 1462 1203M1465 1200 1471 1198M1375 1190 1381 1198M658 1441 673 1443 669 1451 659 1449Z"/>
          <path d="M350 822 375 815 400 810 440 818 475 820 488 830 482 848 450 850 420 852 400 855 370 853 352 845ZM325 735 345 728 370 730 400 720 450 745 440 765 415 772 400 780 378 775 365 758 340 760 325 750ZM335 690 360 680 385 685 392 712 380 725 345 725 333 715ZM328 645 360 638 362 660 335 660ZM315 672 335 660 362 662 365 680 335 685ZM313 690 335 683 350 690 335 700 315 697ZM262 703 295 693 325 698 332 725 325 745 290 740 265 730ZM187 730 207 708 205 745 190 738ZM90 800 130 802 185 808 160 830 155 850 120 858 100 850 108 812 92 812ZM92 812 108 812 103 850 90 850ZM208 778 225 770 250 775 250 790 275 820 285 845 275 848 262 825 230 800 210 795ZM250 845 268 847 266 853ZM219 820h10v15h-10ZM205 768 228 766 225 776 210 778ZM230 763 280 755 280 770 240 772ZM248 738 290 745 285 755 255 750ZM285 760 320 758 318 770 290 775ZM310 765 350 760 375 785 360 795 320 795ZM322 797 362 797 358 812 328 815ZM290 780 315 775 325 800 308 810ZM255 780 290 780 270 785 300 805 285 800ZM303 820 350 815 325 828 330 850 318 850 308 835ZM298 810 306 810 310 825 302 827ZM330 863 350 864M395 867h12M455 805 500 812 520 825 515 838 490 835 478 820ZM415 775 430 772 438 777 423 785Z"/>
          <path class="mid" d="M207 705 225 697 260 703 265 735 245 745 255 765 225 768 205 745ZM125 750 150 745 180 735 205 748 215 765 210 790 198 802 160 805 150 795 148 775Z"/>
          <path d="M113 862 148 865 148 885 110 905 75 930 60 935 40 960 35 960 62 925 85 912 92 882ZM148 865 185 853 220 852 225 885 232 900 230 940 240 955 190 975 95 915 148 885ZM218 852 238 852 235 870 245 885 230 900ZM340 892 375 898 410 895 412 912 395 905 425 958 340 958ZM135 1030 160 1030 163 1058 138 1065ZM163 1025 180 1020 178 1058 168 1058ZM180 1022 200 1015 262 1015 262 1030 240 1050 225 1070 200 1070 180 1058ZM262 1022 268 1050 265 1080 225 1080 225 1065 240 1050ZM410 1045 425 1015 455 1005 475 1025 510 1045 480 1070 440 1075 412 1065ZM412 1072 458 1075 458 1115 445 1125 410 1100ZM272 1278 302 1280 310 1265 345 1255 385 1238 390 1258 398 1270 375 1305 345 1318 300 1325 288 1300ZM412 912 422 888 445 890 500 912 515 905 530 935 560 955 545 978 510 990 475 990 470 1000 445 955ZM535 940 565 935 560 953 540 950ZM412 870 420 870 416 895ZM740 1040 755 1050 750 1060 740 1055Z"/>
          <path class="none" d="M567 785 595 787 640 797 655 820 680 825 660 840 640 838 645 855 620 840 590 812 567 815ZM550 815 590 812 620 840 640 855 605 862 580 845 550 850ZM655 835 675 825 700 832 705 850 680 850 660 850ZM605 862 645 852 680 850 705 850 680 865 672 890 650 905 620 905 602 895ZM797 748 830 735 870 740 880 722 920 735 955 740 1002 742 1010 760 1032 768 1000 785 970 795 960 808 920 815 865 803 825 785 820 765ZM848 920 860 908 875 925 880 950 875 970 868 985 870 1000 855 995 845 970 833 950ZM1188 1113 1220 1125 1235 1145 1258 1162 1225 1155 1210 1145 1188 1152ZM470 990 540 978 545 992 470 1020ZM545 978 565 955 568 940 592 955 575 980 545 995ZM455 850 485 850 495 880 508 905 480 900 445 888 455 870ZM420 855 460 855 455 870 425 885 415 882ZM893 965 908 958 920 975 938 995 930 990 905 975Z"/>
          <path class="none" d="M232 895 245 883 270 890 300 898 310 885 340 892 340 970 270 950 232 940ZM35 962 70 962 70 940 95 925 115 938 118 1000 68 1000 40 990ZM68 1000 118 1000 110 935 187 978 185 1003 140 1010 118 1033 100 1030 70 1010ZM187 978 265 950 272 960 262 1010 215 1013 190 1015 165 1005ZM270 950 330 970 325 1035 290 1045 270 1050 262 1010 272 965ZM330 970 340 958 425 958 432 990 415 1025 400 1035 340 1035 328 1015ZM32 1005 45 990 68 1005 75 1020 40 1018ZM40 1020 75 1022 95 1030 100 1045 70 1035 60 1040ZM62 1042 77 1037 102 1069 82 1061ZM100 1035 132 1035 135 1065 105 1068ZM118 1030 140 1010 160 1010 175 1020 155 1030 130 1033ZM268 1050 325 1035 348 1065 290 1072 265 1075ZM328 1035 400 1022 412 1065 370 1072 348 1062ZM425 1000 440 990 470 1018ZM475 1025 530 1022 522 1050 490 1085 458 1112 458 1078 480 1070 508 1048ZM380 1075 412 1075 408 1105 378 1102ZM290 1075 370 1072 380 1080 372 1110 375 1150 365 1175 345 1162 318 1165 316 1143 290 1140 248 1132 275 1120ZM225 1085 265 1083 290 1075 275 1120 248 1130 222 1105ZM250 1132 285 1135 318 1145 320 1205 245 1203 255 1165ZM318 1170 345 1162 365 1175 372 1150 405 1160 405 1185 375 1200 350 1208 320 1203ZM375 1105 410 1103 445 1125 450 1165 415 1168 375 1150ZM405 1170 455 1163 455 1190 415 1218 417 1250 390 1258 397 1215 410 1185ZM365 1210 375 1195 397 1205 392 1230 372 1232ZM310 1212 350 1208 372 1232 345 1260 310 1272ZM245 1203 350 1208 310 1212 302 1280 272 1278ZM355 1288 365 1283 372 1288 364 1295ZM517 1172 526 1190 502 1255 480 1257 474 1235 482 1200 500 1192Z"/>
          <path class="sea" d="M508 782 540 768 548 782 525 788 540 808 548 845 525 845 518 822 505 800ZM365 800 375 785 400 782 420 785 440 792 462 803 480 818 440 815 400 810 370 815Z"/>
        </g>
      </svg>
    </div>
    <div class="panel">
      <div class="head"><span>Countries</span><span>Visitors</span></div>
      <ul>
        <li><svg class="flag"><use href="#us"/></svg><span>United States</span><b>417</b><em style="--p:42%">42%</em></li>
        <li><svg class="flag"><use href="#de"/></svg><span>Germany</span><b>108</b><em style="--p:11%">11%</em></li>
        <li><svg class="flag"><use href="#fr"/></svg><span>France</span><b>81</b><em style="--p:8%">8%</em></li>
        <li><svg class="flag"><use href="#in"/></svg><span>India</span><b>77</b><em style="--p:8%">8%</em></li>
        <li><svg class="flag"><use href="#gb"/></svg><span>United Kingdom</span><b>69</b><em style="--p:7%">7%</em></li>
        <li><svg class="flag"><use href="#cn"/></svg><span>China</span><b>56</b><em style="--p:6%">6%</em></li>
        <li><svg class="flag"><use href="#ca"/></svg><span>Canada</span><b>50</b><em style="--p:5%">5%</em></li>
        <li><svg class="flag"><use href="#nl"/></svg><span>Netherlands</span><b>48</b><em style="--p:5%">5%</em></li>
        <li><svg class="flag"><use href="#vn"/></svg><span>Vietnam</span><b>44</b><em style="--p:4%">4%</em></li>
        <li><svg class="flag"><use href="#id"/></svg><span>Indonesia</span><b>36</b><em style="--p:4%">4%</em></li>
      </ul>
      <div class="more">More<svg><use href="#arrow"/></svg></div>
    </div>
  </section>

  <section class="grid events">
    <div class="panel">
      <div class="head"><span>Events</span><span>Actions</span></div>
      <ul>
        <li><span>login-button-header</span><b>322</b><em style="--p:50%">50%</em></li>
        <li><span>get-started-button</span><b>133</b><em style="--p:21%">21%</em></li>
        <li><span>live-demo-button</span><b>120</b><em style="--p:19%">19%</em></li>
        <li><span>signup-button-header</span><b>42</b><em style="--p:7%">7%</em></li>
        <li><span>social-GitHub</span><b>11</b><em style="--p:2%">2%</em></li>
        <li><span>community-GitHub</span><b>4</b><em style="--p:1%">1%</em></li>
        <li><span>social-X</span><b>3</b><em style="--p:0%">0%</em></li>
        <li><span>github-discussions-link</span><b>1</b><em style="--p:0%">0%</em></li>
        <li><span>community-Twitter</span><b>1</b><em style="--p:0%">0%</em></li>
        <li><span>community-LinkedIn</span><b>1</b><em style="--p:0%">0%</em></li>
      </ul>
      <div class="more">More<svg><use href="#arrow"/></svg></div>
    </div>
    <div class="panel chart-panel">
      <svg class="chart" id="actions"></svg>
      <div class="legend"><span><i style="background:#5199ef"></i>signup-button-header</span><span><i style="background:#a878e1"></i>get-started-button</span><span><i style="background:#69c478"></i>social-GitHub</span><span><i style="background:#eb9e47"></i>community-GitHub</span><span><i style="background:#e96d73"></i>live-demo-button</span></div>
      <div class="legend second"><span><i style="background:#f9ca41"></i>login-button-header</span><span><i style="background:#34c8df"></i>social-X</span><span><i style="background:#855dc9"></i>community-Twitter</span><span><i style="background:#a1d167"></i>community-LinkedIn</span><span><i style="background:#ffcf34"></i>github-discussions-link</span></div>
    </div>
  </section>
</div>
</div>
<script src="charts.js"></script>
</body>
</html>
```
FILE: styles.css
```css
* { box-sizing: border-box; }
html { background: #b9b9b9; }
body { margin: 0; font-family: Inter, "Liberation Sans", sans-serif; font-size: 17.5px; line-height: 1.5; color: #2c2c2c; }
ul { list-style: none; margin: 0; padding: 0; }
.sprite { position: absolute; width: 0; height: 0; }
.page { position: relative; min-height: 3507px; padding: 0 33px; background: #fff; border-radius: 12px 12px 0 0; }
.progress { position: absolute; top: 0; right: 3px; width: 136px; height: 1px; background: #f00; }
.container { width: 1600px; }
.icon { flex: none; width: 20px; height: 20px; }
.monogram { font-size: 8.5px; fill: #ddd; }

.site-header { display: flex; align-items: center; height: 77px; font-size: 16px; }
.site-header h1 { margin: 0 0 0 13px; font-size: 29.6px; font-weight: 700; line-height: 1; }
.live-dot { width: 13px; height: 13px; margin: 0 14px 0 38px; border-radius: 50%; background: #12a46c; }

.summary { display: flex; justify-content: space-between; height: 148px; padding-top: 25px; }
.metrics { display: grid; grid-template-columns: repeat(5, 212.5px); }
.metric-label { font-weight: 600; color: #4b4b4b; }
.metric-value { font-size: 45px; font-weight: 700; white-space: nowrap; line-height: 67.5px; }
.badge { display: inline-flex; align-items: center; gap: 7px; height: 29px; padding: 0 9px; border-radius: 5px; background: #cef8e0; color: #12a46c; font-size: 15.5px; font-weight: 600; }
.badge.bad { background: #ffebe7; color: #f4573c; }
.badge svg { width: 15px; height: 15px; }
.up { transform: rotate(-90deg); }
.down { transform: rotate(90deg); }
.controls { display: flex; flex-direction: column; align-items: flex-end; padding-top: 16.5px; }
.filter { display: flex; align-items: center; gap: 12px; margin: 0 23px 25px 0; padding: 0; border: 0; background: none; font: inherit; font-weight: 600; color: inherit; }
.filter svg { width: 14px; height: 14px; }
.range { display: flex; gap: 13px; }
.select { display: flex; align-items: center; justify-content: space-between; width: 249px; height: 52px; padding: 0 23px 0 21px; border: 1px solid #c8c8c8; border-radius: 5px; }
.caret { width: 13px; height: 13px; transform: rotate(90deg); color: #777; }
.pager { display: flex; width: 126px; height: 52px; border-radius: 5px; background: #f4f4f4; }
.pager span { flex: 1; display: flex; align-items: center; justify-content: center; }
.pager .off { border-left: 1px solid #cacaca; color: #b3b3b3; }
.pager svg { width: 14px; height: 14px; }
.prev { transform: rotate(180deg); }

.chart { display: block; width: 100%; height: 502px; margin-top: 25px; font-size: 15px; fill: #6e6e6e; }
.chart line { stroke: #eaeaea; stroke-width: 1.25px; }
.legend { display: flex; justify-content: center; gap: 25px; margin-top: 24px; height: 26px; align-items: center; font-size: 15.4px; white-space: nowrap; }
.legend span { display: flex; align-items: center; gap: 15px; }
.legend i { width: 12.5px; height: 12.5px; border-radius: 50%; }
.legend.second { margin-top: 0; padding-left: 25px; }
.overview { height: 750px; }

.grid { display: grid; border-top: 1px solid #e1e1e1; }
.two { grid-template-columns: 1fr 1fr; height: 604px; }
.three { grid-template-columns: repeat(3, 1fr); height: 603px; }
.geo { grid-template-columns: 2fr 1fr; height: 783px; }
.events { grid-template-columns: 1fr 2fr; height: 653px; }
.panel { padding: 37.6px 25px 0; min-width: 0; }
.two .panel, .geo .panel { padding-top: 38px; }
.panel:first-child { padding-left: 0; }
.panel:last-child { padding-right: 0; }
.grid > * + * { border-left: 1px solid #e1e1e1; }
.head { display: flex; justify-content: space-between; height: 50px; line-height: 50px; font-weight: 700; letter-spacing: -0.1px; }
.head span:last-child { width: 125px; text-align: center; }
ul { min-height: 423px; }
li { display: flex; align-items: center; height: 37.5px; margin-bottom: 6.25px; padding-left: 13px; }
li span { flex: 1; padding-right: 12.5px; }
li svg + span { padding-left: 12.5px; }
li b { font-weight: 700; margin-right: 12.5px; }
li em { width: 62.5px; height: 37.5px; padding-left: 12px; border-left: 1px solid #858b94; line-height: 37.5px; font-style: normal; color: #8f8f8f; background: linear-gradient(#e6f0fd, #e6f0fd) 0 0 / var(--p) 100% no-repeat; }
.flag { flex: none; width: 25px; height: 16px; }
.more { display: flex; align-items: center; justify-content: center; gap: 12px; height: 52px; }
.more svg { width: 15px; height: 15px; }
.events .chart-panel { padding-top: 0; }

.map { padding: 105px 0 0 131px; }
.map svg { display: block; width: 877px; height: 593px; }
.map path { fill: #ddeafb; stroke: #4a95ef; stroke-width: 1.1px; stroke-linejoin: round; vector-effect: non-scaling-stroke; }
.map .none { fill: #f4f4f4; }
.map .top { fill: #b0d0f7; }
.map .mid { fill: #d5e6fa; }
.map .sea { fill: #fff; }
```
FILE: charts.js
```js
const NS = 'http://www.w3.org/2000/svg';
const TOP = 13.4, BOTTOM = 465.4, SLOTS = 25;

function add(svg, name, attrs, text) {
  const el = document.createElementNS(NS, name);
  for (const key in attrs) el.setAttribute(key, attrs[key]);
  if (text !== undefined) el.textContent = text;
  svg.appendChild(el);
}

const hours = [...Array(24).keys()].map(i => {
  const h = (i + 15) % 24;
  return (h % 12 || 12) + (h < 12 ? 'AM' : 'PM');
});

function axes(svg, width, left, max, step, every) {
  for (let v = 0; v <= max; v += step) {
    const y = BOTTOM - (v / max) * (BOTTOM - TOP);
    add(svg, 'line', { x1: left - 10, x2: width, y1: y, y2: y });
    add(svg, 'text', { x: left - 14, y: y + 5, 'text-anchor': 'end' }, v);
  }
  add(svg, 'line', { x1: left, x2: left, y1: TOP, y2: BOTTOM });
  const slot = (width - left) / SLOTS;
  hours.forEach((h, i) => {
    if (i % every === 0) add(svg, 'text', { x: left + slot * (i + 0.5), y: BOTTOM + 28, 'text-anchor': 'middle' }, h);
  });
  return slot;
}

function bar(svg, x, w, from, to, max, color, alpha, edge) {
  const k = (BOTTOM - TOP) / max, y = BOTTOM - to * k, h = (to - from) * k;
  add(svg, 'rect', { x, y, width: w, height: h, fill: color, 'fill-opacity': alpha });
  add(svg, 'path', { d: `M${x + 0.6} ${y + h}V${y + 0.6}h${w - 1.2}V${y + h}`, fill: 'none', stroke: color, 'stroke-opacity': edge, 'stroke-width': 1.25 });
}

const views = [230, 294, 417, 257, 304, 306, 301, 290, 223, 219, 259, 215, 312, 200, 260, 322, 268, 142, 88, 110, 197, 146, 184, 98];
const visitors = [81, 83, 104, 92, 85, 114, 83, 105, 80, 84, 79, 70, 68, 75, 86, 129, 119, 70, 44, 51, 62, 59, 53, 49];
const traffic = document.getElementById('traffic');
const slot = axes(traffic, 1600, 46, 450, 50, 1);
views.forEach((v, i) => {
  const x = 46 + slot * (i + 0.14);
  bar(traffic, x, slot * 0.72, 0, v, 450, '#2680eb', 0.4, 0.5);
  bar(traffic, x, slot * 0.72, 0, visitors[i], 450, '#2680eb', 0.6, 0.6);
});

const colors = { b: '#2680eb', p: '#9256d9', g: '#44b556', o: '#e68619', r: '#e34850', y: '#f7bd12', c: '#01bad7', v: '#6734bc', l: '#89c541', d: '#ffc301' };
/* Each entry lists the running total reached by every stacked series. */
const stacks = [
  'b2 p7 g8 o9 r15 y34', 'b2 p7 r19 y35', 'b4 p16 r29 y43 c44', 'b4 p9 r17 y32', 'b2 p6 g7 r14 y32', 'b3 p12 g13 r17 y31',
  'b1 p6 r11 y24', 'b2 p8 r11 y36', 'b2 p3 r6 y21 c22', 'b1 p10 g11 o12 r18 y33', 'p11 r14 y28', 'b1 p5 g6 r10 y19 v20 l21',
  'b4 p10 g11 r12 y26', 'p3 r4 y20 c21 d22', 'b1 p6 r11 y20', 'b10 p18 o19 r29 y50', 'p6 r10 y20', 'b1 p5 r11 y24',
  'p6 g7 r11 y15', 'b1 p7 g8 r12 y24', 'b1 p7 r15 y28', 'p4 o5 y19', 'p1 g2 r4 y11', 'p2 g4 r5 y7'
];
const actions = document.getElementById('actions');
const step = axes(actions, 1040, 35.5, 50, 5, 2);
stacks.forEach((stack, i) => {
  let from = 0;
  for (const part of stack.split(' ')) {
    const to = +part.slice(1);
    bar(actions, 35.5 + step * (i + 0.14), step * 0.72, from, to, 50, colors[part[0]], 0.6, 0.25);
    from = to;
  }
});
```
